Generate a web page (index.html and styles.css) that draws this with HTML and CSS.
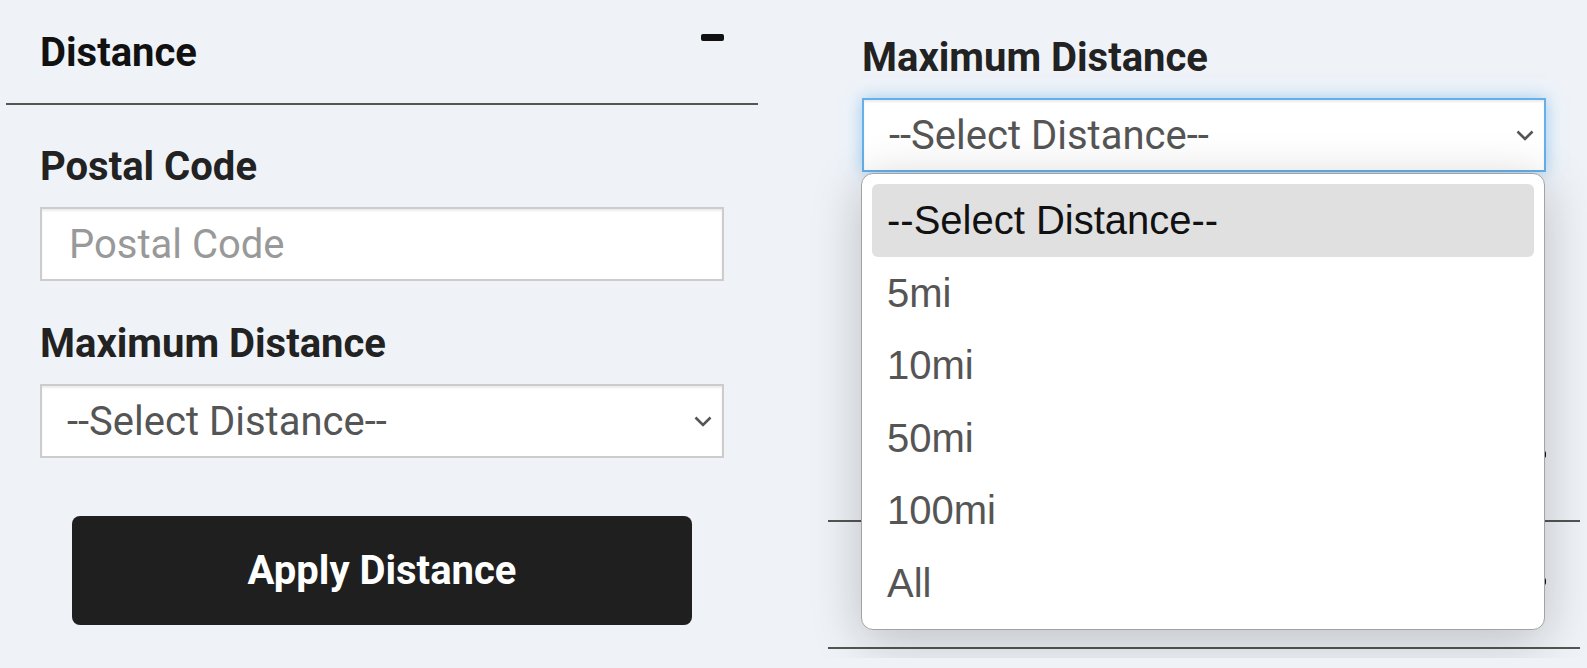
FILE: index.html
```html
<!DOCTYPE html>
<html lang="en">
<head>
    <meta charset="UTF-8">
    <meta name="viewport" content="width=device-width, initial-scale=1.0">
    <title>Distance Filter</title>
    <link rel="stylesheet" href="styles.css">
</head>
<body>
    <div class="page">
        <div class="col col-left">
            <section class="filter">
                <div class="filter-head">
                    <h2>Distance</h2>
                    <span class="toggle"></span>
                </div>
                <div class="filter-body">
                    <div class="field">
                        <label for="postal">Postal Code</label>
                        <input type="text" id="postal" class="control" placeholder="Postal Code">
                    </div>
                    <div class="field">
                        <label>Maximum Distance</label>
                        <div class="control select">
                            <span>--Select Distance--</span>
                            <svg class="chevron" width="18" height="11" viewBox="0 0 18 11"><path d="M1.5 1.5 L9 9 L16.5 1.5" fill="none" stroke="#555" stroke-width="2.6"/></svg>
                        </div>
                    </div>
                    <button class="apply">Apply Distance</button>
                </div>
            </section>
        </div>

        <div class="col col-right">
            <section class="filter">
                <div class="filter-body no-head">
                    <div class="field">
                        <label>Maximum Distance</label>
                        <div class="select-wrap">
                            <div class="control select focused">
                                <span>--Select Distance--</span>
                                <svg class="chevron" width="18" height="11" viewBox="0 0 18 11"><path d="M1.5 1.5 L9 9 L16.5 1.5" fill="none" stroke="#555" stroke-width="2.6"/></svg>
                            </div>
                            <ul class="options">
                                <li class="active">--Select Distance--</li>
                                <li>5mi</li>
                                <li>10mi</li>
                                <li>50mi</li>
                                <li>100mi</li>
                                <li>All</li>
                            </ul>
                        </div>
                    </div>
                </div>
            </section>
            <!-- sections under the open dropdown: only their rule and toggle tip show -->
            <section class="filter">
                <div class="filter-head">
                    <span class="head-spacer"></span>
                    <span class="toggle"></span>
                </div>
            </section>
            <section class="filter">
                <div class="filter-head">
                    <span class="head-spacer"></span>
                    <span class="toggle"></span>
                </div>
            </section>
        </div>
    </div>
</body>
</html>
```

FILE: styles.css
```css
* {
    box-sizing: border-box;
}
body {
    margin: 0;
    background-color: #eff3f8;
    font-family: Roboto, "Liberation Sans", Arial, sans-serif;
    color: #222;
}
.page {
    display: flex;
    height: 668px;
    overflow: hidden;
}
.col-left {
    width: 807px;
    padding-left: 6px;
    margin-top: -22px;
}
.col-right {
    flex: 1;
    height: 658px;
    overflow: hidden;
    padding-left: 21px;
}
.filter {
    width: 752px;
}
.filter-head {
    display: flex;
    justify-content: space-between;
    align-items: flex-start;
    padding: 51px 34px 27px;
    border-bottom: 2px solid #555;
}
.filter-head h2 {
    margin: 0;
    font-size: 40px;
    line-height: 47px;
    font-weight: 700;
    color: #111;
}
.head-spacer {
    height: 47px;
}
.toggle {
    width: 23px;
    height: 7px;
    margin-top: 5px;
    background-color: #111;
    border-radius: 2px;
}
.filter-body {
    padding: 38px 34px 55px;
}
.filter-body.no-head {
    padding-top: 34px;
    padding-bottom: 223px;
}
.field {
    margin-bottom: 39px;
}
.field:last-of-type {
    margin-bottom: 0;
}
.field label {
    display: block;
    margin-bottom: 17px;
    font-size: 40px;
    line-height: 47px;
    font-weight: 700;
    color: #222;
}
.control {
    display: block;
    width: 100%;
    height: 74px;
    padding: 0 25px 0 27px;
    border: 2px solid #ccc;
    background-color: #fff;
    box-shadow: inset 0 2px 2px rgba(0, 0, 0, 0.075);
    font-family: Roboto, sans-serif;
    font-size: 40px;
    color: #555;
    outline: none;
}
.control::placeholder {
    color: #999;
}
.select {
    display: flex;
    align-items: center;
    justify-content: space-between;
    padding: 0 10px 0 25px;
}
.select.focused {
    border-color: #66afe9;
    box-shadow: inset 0 2px 2px rgba(0, 0, 0, 0.075), 0 0 16px rgba(102, 175, 233, 0.6);
}
.select-wrap {
    position: relative;
}
.options {
    position: absolute;
    top: calc(100% + 1px);
    left: -1px;
    right: 1px;
    z-index: 2;
    margin: 0;
    padding: 10px;
    list-style: none;
    background-color: #fff;
    border: 1px solid #a3a3a3;
    border-radius: 12px;
    box-shadow: 0 10px 50px rgba(0, 0, 0, 0.22);
    font-family: "Liberation Sans", Arial, sans-serif;
    font-size: 40px;
    color: #555;
}
.options li {
    height: 72.5px;
    line-height: 72.5px;
    padding-left: 15px;
    border-radius: 6px;
}
.options li.active {
    background-color: #e0e0e0;
    color: #111;
}
.apply {
    display: block;
    width: 620px;
    height: 109px;
    margin: 58px auto 0;
    border: none;
    border-radius: 8px;
    background-color: #1f1f1f;
    color: #fff;
    font-family: Roboto, sans-serif;
    font-size: 40px;
    font-weight: 700;
}
```
